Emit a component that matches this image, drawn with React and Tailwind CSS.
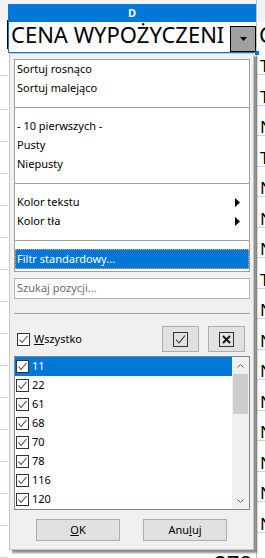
import React from "react";

const font = { fontFamily: '"Noto Sans", "Liberation Sans", sans-serif' };

function Check({ size = 13 }) {
  return (
    <svg width={size} height={size} viewBox="0 0 13 13" className="shrink-0">
      <rect x="0.5" y="0.5" width="12" height="12" fill="white" stroke="#333" />
      <polyline points="2.5,6.5 5,9.5 10.5,3" fill="none" stroke="#444" strokeWidth="1.1" />
    </svg>
  );
}

function MenuItem({ children, arrow, active }) {
  return (
    <div
      className={`flex items-center pl-[2px] pr-[9px] ${
        active ? "h-[20px] bg-[#0078d7] text-white outline-1 outline-dotted outline-[#f0a050] -outline-offset-1" : "h-[19px] text-black"
      }`}
    >
      <span className="flex-1">{children}</span>
      {arrow && (
        <svg width="5" height="9" viewBox="0 0 5 9">
          <polygon points="0,0 5,4.5 0,9" fill="#000" />
        </svg>
      )}
    </div>
  );
}

function Sep({ h = 19 }) {
  return (
    <div className="flex items-center" style={{ height: h }}>
      <div className="w-full h-px bg-[#a0a0a0]" />
    </div>
  );
}

const values = ["11", "22", "61", "68", "70", "78", "116", "120"];
const rightRows = ["TAK", "TAK", "NIE", "TAK", "NIE", "NIE", "NIE", "TAK", "NIE", "NIE", "NIE", "NIE", "NIE", "NIE", "NIE", "NIE"];

export default function App() {
  return (
    <div className="relative w-[265px] h-[558px] overflow-hidden bg-white flex" style={font}>
      {/* left strip */}
      <div className="w-[8px] flex flex-col shrink-0">
        <div className="h-[22px] bg-[#f3f3f3]" />
        <div className="h-[31px] border-r border-black" />
        <div className="h-[29px] border-b border-[#d4d4d4]" />
        <div className="h-[36px] border-b border-[#d4d4d4]" />
        {Array.from({ length: 14 }).map((_, i) => (
          <div key={i} className="h-[32px] shrink-0 border-b border-[#d4d4d4]" />
        ))}
      </div>

      {/* column D */}
      <div className="w-[248px] flex flex-col shrink-0">
        <div className="h-[22px] bg-[#f3f3f3] pt-[4px]">
          <div className="h-[18px] bg-[#0078d7] text-white text-[11px] font-bold flex items-center justify-center">
            D
          </div>
        </div>
        <div className="h-[31px] border-l border-b border-[#0078d7] flex items-start relative">
          <span className="pl-[2px] pt-[1px] text-[22px] leading-[22px] text-black whitespace-nowrap flex-1">
            CENA WYPOŻYCZENI
          </span>
          <div className="mt-[4px] w-[26px] h-[26px] bg-[#a0a0a0] border border-black flex items-center justify-center shrink-0">
            <svg width="7" height="4" viewBox="0 0 7 4">
              <polygon points="0,0 7,0 3.5,4" fill="#000" />
            </svg>
          </div>
          <div className="absolute right-[-3px] bottom-[-3px] w-[4px] h-[4px] bg-[#0078d7]" />
        </div>
        <div className="h-[499px] shrink-0" />
        <div className="text-right pr-[4px] text-[22px] leading-[22px] text-black shrink-0">278</div>
      </div>

      {/* right strip */}
      <div className="flex-1 flex flex-col border-l border-[#c0c0c0] min-w-0">
        <div className="h-[22px] bg-[#f3f3f3]" />
        <div className="h-[31px] pl-[2px] pt-[1px] text-[22px] leading-[22px] text-black whitespace-nowrap overflow-hidden">
          C
        </div>
        <div className="h-[22px] shrink-0 border-b border-[#d4d4d4] flex items-end pl-[3px] pb-[1px] text-[17px] leading-[14px] text-black whitespace-nowrap overflow-hidden">
          {rightRows[0]}
        </div>
        {rightRows.slice(1).map((t, i) => (
          <div
            key={i}
            className="h-[30.5px] shrink-0 border-b border-[#d4d4d4] flex items-end pl-[3px] pb-[1px] text-[17px] leading-[14px] text-black whitespace-nowrap overflow-hidden"
          >
            {t}
          </div>
        ))}
      </div>

      {/* autofilter popup */}
      <div className="absolute left-[9px] top-[53px] w-[245px] h-[497px] bg-[#f0f0f0] border border-[#c8c8c8] shadow-[3px_3px_2px_rgba(0,0,0,0.45)] text-[11px] text-black flex flex-col">
        <div className="ml-[4px] mt-[5px] w-[236px] bg-white border border-[#a0a0a0] pb-[2px]">
          <MenuItem>Sortuj rosnąco</MenuItem>
          <MenuItem>Sortuj malejąco</MenuItem>
          <Sep />
          <MenuItem>- 10 pierwszych -</MenuItem>
          <MenuItem>Pusty</MenuItem>
          <MenuItem>Niepusty</MenuItem>
          <Sep />
          <MenuItem arrow>Kolor tekstu</MenuItem>
          <MenuItem arrow>Kolor tła</MenuItem>
          <Sep h={18} />
          <MenuItem active>Filtr standardowy...</MenuItem>
        </div>

        <div className="ml-[4px] mt-[6px] w-[236px] h-[21px] bg-white border border-[#b4b4b4] flex items-center pl-[2px] text-[#6d6d6d]">
          Szukaj pozycji...
        </div>

        <div className="ml-[4px] mt-[14px] w-[236px] h-px bg-[#a0a0a0]" />

        <div className="ml-[4px] mt-[12px] w-[236px] h-[26px] flex items-center">
          <div className="pl-[3px] flex items-center gap-[4px] flex-1">
            <Check />
            <span>
              <span className="underline">W</span>szystko
            </span>
          </div>
          <div className="w-[37px] h-[26px] bg-[#e1e1e1] border border-[#adadad] flex items-center justify-center">
            <svg width="15" height="15" viewBox="0 0 15 15">
              <rect x="0.5" y="0.5" width="14" height="14" fill="none" stroke="#333" />
              <polyline points="3,7.5 6,11 12,3.5" fill="none" stroke="#333" strokeWidth="1.1" />
            </svg>
          </div>
          <div className="ml-[9px] mr-[5px] w-[37px] h-[26px] bg-[#e1e1e1] border border-[#adadad] flex items-center justify-center">
            <svg width="15" height="15" viewBox="0 0 15 15">
              <rect x="0.5" y="0.5" width="14" height="14" fill="none" stroke="#333" />
              <path d="M4 4 L11 11 M11 4 L4 11" stroke="#111" strokeWidth="1.8" />
            </svg>
          </div>
        </div>

        <div className="ml-[4px] mt-[4px] w-[236px] h-[154px] bg-white border border-[#828790] flex">
          <div className="flex-1 flex flex-col">
            {values.map((v, i) => (
              <div
                key={v}
                className={`h-[19px] shrink-0 flex items-center gap-[3px] pl-[1px] ${
                  i === 0 ? "bg-[#0078d7] text-white" : "text-black"
                }`}
              >
                <Check />
                <span>{v}</span>
              </div>
            ))}
          </div>
          <div className="w-[17px] bg-[#f0f0f0] flex flex-col items-center">
            <div className="h-[17px] flex items-center justify-center">
              <svg width="7" height="4" viewBox="0 0 7 4">
                <polyline points="0.5,3.5 3.5,0.5 6.5,3.5" fill="none" stroke="#606060" />
              </svg>
            </div>
            <div className="w-[15px] h-[40px] bg-[#cdcdcd]" />
            <div className="flex-1" />
            <div className="h-[17px] flex items-center justify-center">
              <svg width="7" height="4" viewBox="0 0 7 4">
                <polyline points="0.5,0.5 3.5,3.5 6.5,0.5" fill="none" stroke="#606060" />
              </svg>
            </div>
          </div>
        </div>

        <div className="mt-[9px] flex justify-center gap-[23px]">
          <div className="w-[84px] h-[22px] bg-[#e1e1e1] border border-[#adadad] flex items-center justify-center">
            <span>
              <span className="underline">O</span>K
            </span>
          </div>
          <div className="w-[84px] h-[22px] bg-[#e1e1e1] border border-[#adadad] flex items-center justify-center">
            <span>
              Anu<span className="underline">l</span>uj
            </span>
          </div>
        </div>
      </div>
    </div>
  );
}
